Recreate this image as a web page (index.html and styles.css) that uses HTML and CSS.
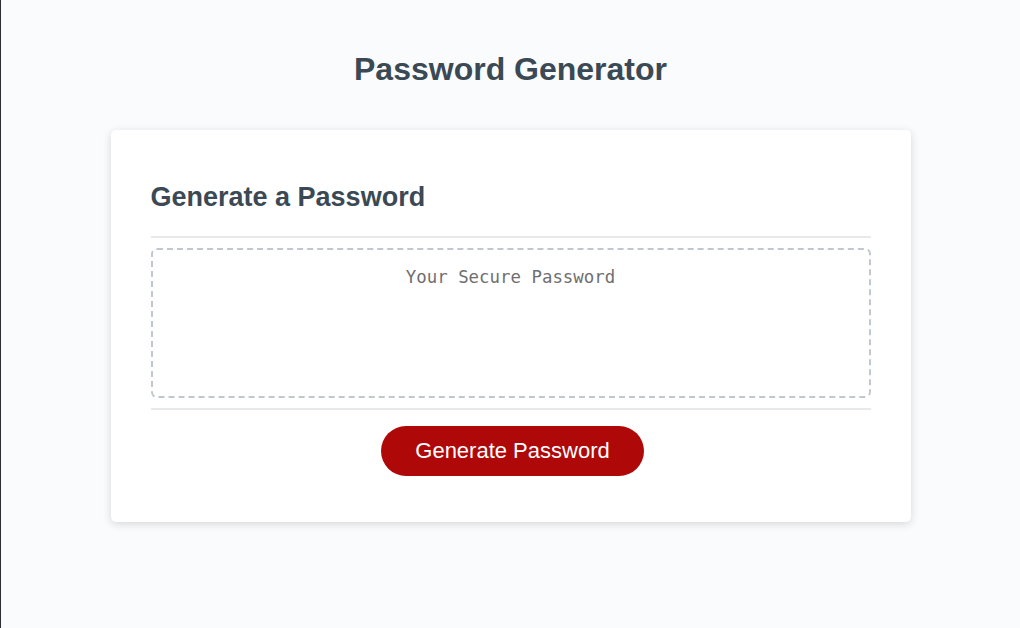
FILE: index.html
```html
<!DOCTYPE html>
<html lang="en">
<head>
<meta charset="UTF-8">
<title>Password Generator</title>
<link rel="stylesheet" href="styles.css">
</head>
<body>
<div class="wrapper">
  <header class="page-header">
    <h1 class="page-title">Password Generator</h1>
  </header>
  <div class="card">
    <div class="card-header">
      <h2 class="card-title">Generate a Password</h2>
    </div>
    <div class="card-body">
      <textarea readonly class="password" placeholder="Your Secure Password" aria-label="Generated Password"></textarea>
    </div>
    <div class="card-footer">
      <button class="btn">Generate Password</button>
    </div>
  </div>
</div>
</body>
</html>
```
FILE: styles.css
```css
*, *::before, *::after {
  box-sizing: border-box;
}

html, body, .wrapper {
  height: 100%;
  margin: 0;
  padding: 0;
  font-family: "Liberation Sans", Arial, sans-serif;
  background-color: #f9fbfd;
}

body {
  border-left: 1px solid #2a2e33;
}

.wrapper {
  padding-top: 30px;
  padding-left: 20px;
  padding-right: 20px;
}

.page-header {
  text-align: center;
  padding: 0 20px 20px;
  color: hsl(206, 17%, 28%);
}

.page-title {
  font-size: 32px;
  margin: 21.44px 0;
}

.card {
  background-color: #fff;
  border-radius: 5px;
  box-shadow: rgba(0, 0, 0, 0.15) 0 2px 8px 0;
  color: hsl(206, 17%, 28%);
  font-size: 18px;
  margin: 0 auto;
  max-width: 800px;
  padding: 30px 40px;
}

.card-title {
  font-size: 27px;
  margin: 22.4px 0;
}

.card-header::after {
  content: " ";
  display: block;
  width: 100%;
  background: #e7e9eb;
  height: 2px;
}

.card-body {
  min-height: 100px;
}

.card-footer {
  text-align: center;
}

.card-footer::before {
  content: " ";
  display: block;
  width: 100%;
  background: #e7e9eb;
  height: 2px;
}

.password {
  appearance: none;
  display: block;
  width: 100%;
  padding: 16px 15px 85px;
  font-family: "DejaVu Sans Mono", "Liberation Mono", monospace;
  font-size: 17.4px;
  line-height: 22.4px;
  height: 150px;
  text-align: center;
  margin: 10px 0;
  border: 2px dashed #c0c7cf;
  border-radius: 6px;
  resize: none;
  overflow: hidden;
  background: #fff;
  color: #333;
}

.password::placeholder {
  color: #6f6f6f;
}

.btn {
  border: none;
  background-color: hsl(360, 91%, 36%);
  border-radius: 25px;
  color: #fff;
  display: inline-block;
  font-family: "Liberation Sans", Arial, sans-serif;
  font-size: 22px;
  line-height: 22px;
  margin: 16px 16px 16px 20px;
  padding: 14px 34px;
  text-align: center;
  cursor: pointer;
}
```
